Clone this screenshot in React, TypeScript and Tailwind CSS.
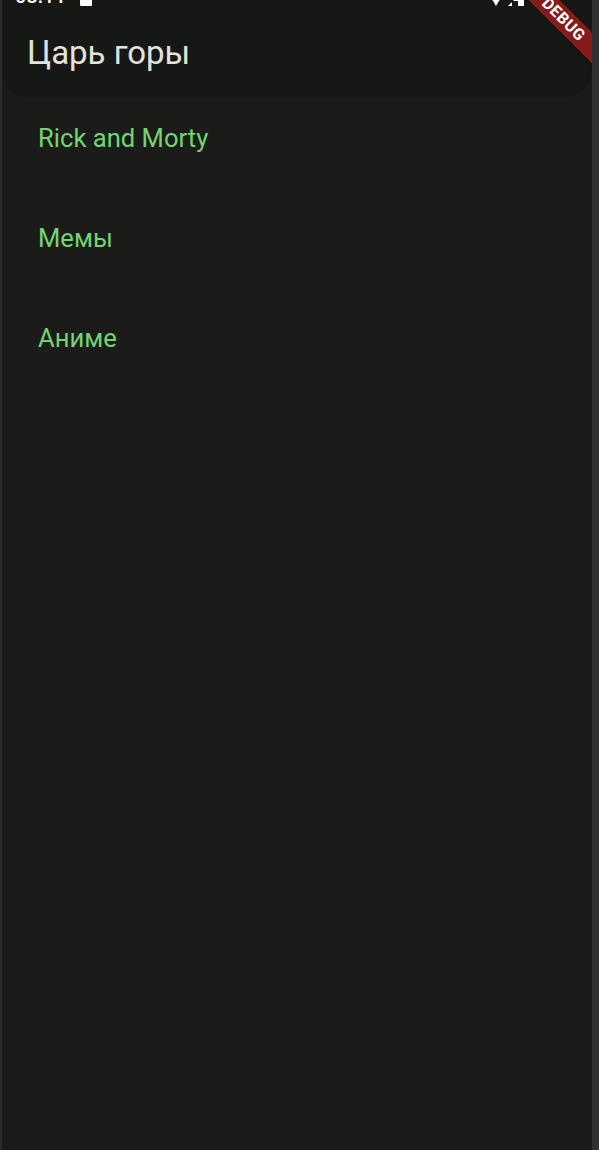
const items = ["Rick and Morty", "Мемы", "Аниме"];

const StatusBar = () => (
  <div className="h-[6px] overflow-hidden flex items-end justify-between px-[13px]">
    <div className="flex items-end gap-[14px]">
      <span className="text-white text-[20px] leading-[20px] font-medium">08:11</span>
      <span className="w-[12px] h-[16px] bg-white rounded-[1px]" />
    </div>
    <div className="flex items-end gap-[6px] mr-[55px]">
      <svg width="12" height="14" viewBox="0 0 12 14">
        <path d="M0 4 L6 14 L12 4 Q6 -2 0 4 Z" fill="#fff" />
      </svg>
      <svg width="16" height="16" viewBox="0 0 16 16">
        <path d="M16 0 L16 16 L0 16 Z" fill="#fff" />
        <rect x="4" y="11" width="6" height="5" fill="#161816" />
      </svg>
    </div>
  </div>
);

const DebugBanner = () => (
  <div className="absolute left-[478px] top-[5px] w-[160px] h-[22px] rotate-45 bg-[#851b1b] flex items-center justify-center pl-[10px] shadow-[0_1px_2px_rgba(0,0,0,0.5)]">
    <span className="text-white text-[16px] font-bold tracking-[0.5px] leading-none">DEBUG</span>
  </div>
);

export default function App() {
  return (
    <div className="w-full h-[1150px] flex bg-[#1b1c1a] font-['Roboto',sans-serif]">
      <div className="w-[2px] bg-[#2b2c30]" />
      <div className="flex-1 relative overflow-hidden bg-[#1b1c1a]">
        <div className="h-[97px] bg-[#161816] rounded-b-[26px]">
          <StatusBar />
          <div className="pt-[27px] pl-[25px] text-[33px] leading-[40px] text-[#e2e3dc]">
            Царь горы
          </div>
        </div>
        <div className="flex flex-col gap-[68px] pt-[25px] pl-[36px]">
          {items.map((item) => (
            <div key={item} className="text-[25.6px] leading-[32px] text-[#72d572]">
              {item}
            </div>
          ))}
        </div>
        <DebugBanner />
      </div>
      <div className="w-[7px] bg-[#2e3034]" />
    </div>
  );
}
